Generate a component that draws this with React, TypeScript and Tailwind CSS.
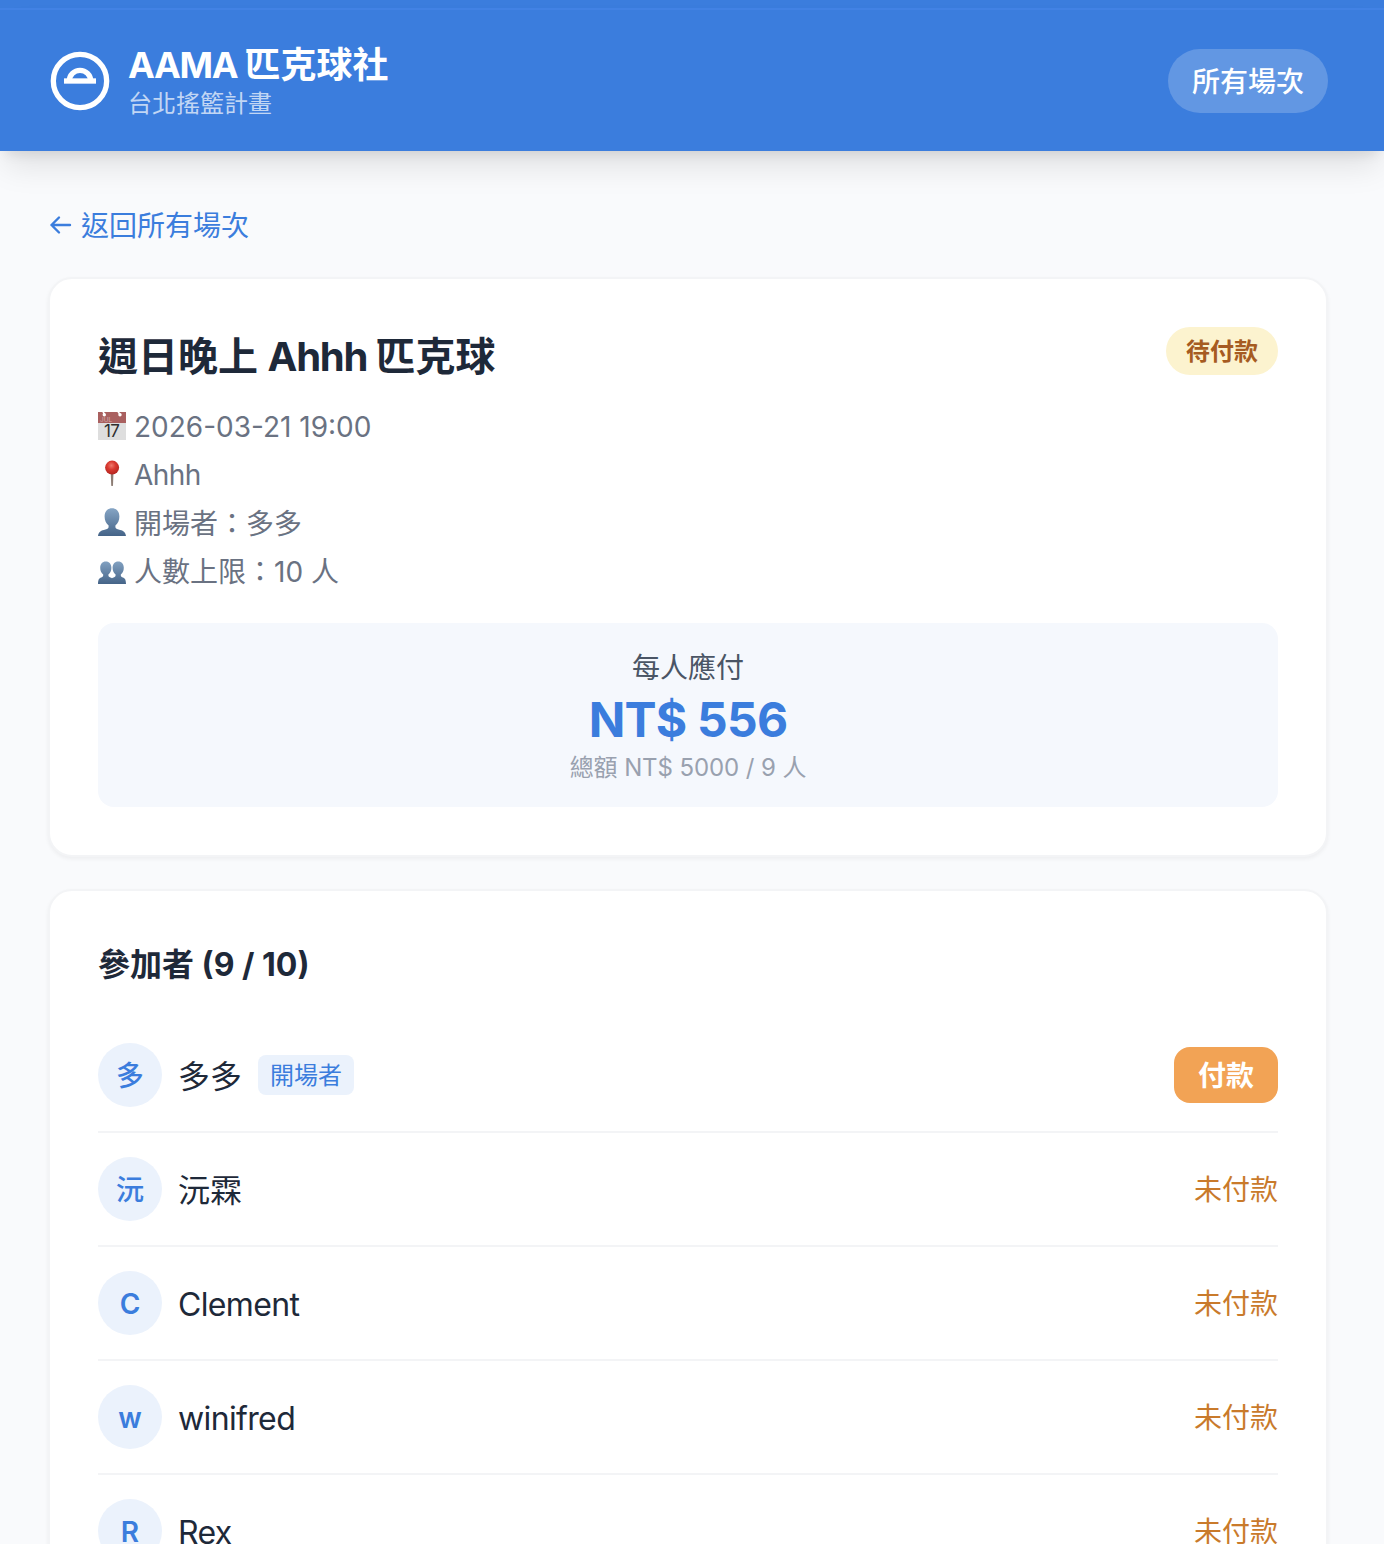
import React from 'react';
import clsx from 'clsx';

interface Participant {
  name: string;
  isHost?: boolean;
}

const PARTICIPANTS: Participant[] = [
  { name: '多多', isHost: true },
  { name: '沅霖' },
  { name: 'Clement' },
  { name: 'winifred' },
  { name: 'Rex' },
];

function Logo() {
  return (
    <svg className="w-16 h-16" viewBox="0 0 24 24" fill="none" stroke="currentColor" strokeWidth="2">
      <circle cx="12" cy="12" r="10" />
      <path d="M8 12a4 4 0 0 1 8 0" />
      <path d="M6 12h12" />
    </svg>
  );
}

function CalendarIcon() {
  return (
    <svg className="w-7 h-7 -mt-0.5 shrink-0" viewBox="0 0 28 28">
      <rect width="28" height="28" fill="#dedede" />
      <rect width="28" height="11" fill="#a9605f" />
      <path d="M5 0l1.5 2M20 0l2 2" stroke="#fff" strokeWidth="1.6" />
      <circle cx="6.3" cy="2.8" r="1.7" fill="#fff" />
      <circle cx="22" cy="2.8" r="1.7" fill="#fff" />
      <text x="2" y="9.6" fontSize="6.5" fill="#d3a9a8" fontFamily="Inter, sans-serif">JUL</text>
      <text x="13.7" y="25.2" fontSize="17" fill="#2e2e2e" textAnchor="middle" letterSpacing="-0.6" fontFamily="Inter, sans-serif">17</text>
    </svg>
  );
}

function PinIcon() {
  return (
    <svg className="w-7 h-7 -mt-0.5 shrink-0" viewBox="0 0 28 28">
      <defs>
        <radialGradient id="pin" cx="0.45" cy="0.35" r="0.65">
          <stop offset="0" stopColor="#f0796c" />
          <stop offset="0.45" stopColor="#d93a31" />
          <stop offset="1" stopColor="#b3241f" />
        </radialGradient>
      </defs>
      <path d="M12.7 12h2.8l-.5 13.2a.9.9 0 0 1-1.8 0z" fill="#8d7d75" />
      <circle cx="14.1" cy="7.6" r="7" fill="url(#pin)" />
    </svg>
  );
}

function PersonIcon() {
  return (
    <svg className="w-7 h-7 -mt-0.5 shrink-0" viewBox="0 0 28 28">
      <defs>
        <linearGradient id="person" x1="0" y1="0" x2="0" y2="28" gradientUnits="userSpaceOnUse">
          <stop offset="0" stopColor="#86a5c5" />
          <stop offset="1" stopColor="#456488" />
        </linearGradient>
      </defs>
      <path
        d="M14 .3c4.5 0 7.4 3.3 7.4 8.2 0 3.9-1.5 7.2-4 8.9-.3 2.600.6 3.500 3.200 4.200 4.200 1 6.800 2 7.400 6.400H0c.6-4.400 3.200-5.400 7.400-6.400 2.600-.7 3.500-1.600 3.200-4.200-2.500-1.700-4-5-4-8.900C6.600 3.600 9.500.3 14 .3z"
        fill="url(#person)"
      />
    </svg>
  );
}

function PeopleIcon() {
  return (
    <svg className="w-7 h-7 -mt-0.5 shrink-0" viewBox="0 0 28 28">
      <defs>
        <linearGradient id="people" x1="0" y1="4" x2="0" y2="28" gradientUnits="userSpaceOnUse">
          <stop offset="0" stopColor="#86a5c5" />
          <stop offset="1" stopColor="#456488" />
        </linearGradient>
      </defs>
      <path
        d="M7.8 5.500c3.500 0 5.600 2.600 5.600 6.200 0 3-1.200 5.400-3 6.800-.1 1.800.5 2.500 2 3 .6.2 1.100.4 1.600.7.5-.3 1-.5 1.600-.7 1.500-.5 2.100-1.200 2-3-1.800-1.400-3-3.800-3-6.800 0-3.600 2.100-6.200 5.600-6.200s5.600 2.600 5.600 6.200c0 3-1.200 5.400-3 6.800-.1 1.800.5 2.500 2 3 2.200.7 3.100 2 3.200 6.500H0c.1-4.500 1-5.800 3.200-6.500 1.500-.5 2.100-1.200 2-3-1.800-1.400-3-3.800-3-6.800 0-3.600 2.100-6.200 5.600-6.200z"
        fill="url(#people)"
      />
    </svg>
  );
}

function BackArrow() {
  return (
    <svg className="w-6 h-6 shrink-0" viewBox="0 0 24 24" fill="none" stroke="currentColor" strokeWidth="2.4" strokeLinecap="round" strokeLinejoin="round">
      <path d="M22 12H3.5M11 4.5L3.5 12l7.5 7.500" />
    </svg>
  );
}

function ParticipantRow({ name, isHost }: Participant) {
  const isLatin = /^[A-Za-z]/.test(name);

  return (
    <li className="flex items-center justify-between py-6 border-b-2 border-gray-100">
      <div className="flex items-center gap-4">
        <div
          className={clsx(
            'w-16 h-16 pt-0.5 rounded-full bg-[#ebf2fc] text-[#3b7ddd] text-[28px] flex items-center justify-center',
            isLatin ? 'font-semibold' : 'font-medium'
          )}
        >
          {name[0]}
        </div>
        <span className={clsx('pt-[3px] text-[32px] leading-12 text-gray-800', isLatin && 'tracking-[-0.02em]')}>{name}</span>
        {isHost && (
          <span className="bg-[#ebf2fc] text-[#3b7ddd] text-2xl px-3 pt-[5px] pb-[3px] rounded-lg">開場者</span>
        )}
      </div>
      {isHost ? (
        <button className="bg-[#f2a355] text-white text-[28px] leading-10 font-bold px-6 pt-[9px] pb-[7px] rounded-2xl">付款</button>
      ) : (
        <span className="pt-0.5 text-[28px] leading-10 text-[#c97a2b]">未付款</span>
      )}
    </li>
  );
}

export default function App() {
  return (
    <div className="h-[1544px] overflow-hidden bg-[#f9fafc] font-[Inter,'Noto_Sans_CJK_TC',sans-serif]">
      <div className="h-2 bg-[#3b7ddd]" />
      <header className="h-[143px] border-t-2 border-[#4282e4] bg-[#3b7ddd] text-white pl-12 pr-14 flex items-center justify-between shadow-[0_20px_30px_-5px_rgba(0,0,0,0.1),0_8px_12px_-6px_rgba(0,0,0,0.1)]">
        <div className="flex items-center gap-4">
          <Logo />
          <div className="pt-0.5">
            <h1 className="text-4xl leading-[45px] font-bold"><span className="tracking-[-0.038em]">AAMA </span>匹克球社</h1>
            <p className="text-2xl leading-8 text-white/70">台北搖籃計畫</p>
          </div>
        </div>
        <button className="bg-white/20 rounded-full px-6 pt-[13px] pb-[11px] text-[28px] leading-10 font-medium">所有場次</button>
      </header>

      <main className="pl-12 pr-14 pt-[54px]">
        <a href="#" className="flex h-10 items-center gap-[9px] text-[28px] leading-10 text-[#3b7ddd]">
          <BackArrow />
          <span className="pt-0.5">返回所有場次</span>
        </a>

        {/* Session details */}
        <section className="mt-8 h-[580px] bg-white rounded-3xl border-2 border-gray-100 shadow-[0_2px_4px_rgba(0,0,0,0.05)] p-12">
          <div className="flex items-start justify-between">
            <h2 className="pt-0.5 text-[40px] leading-14 font-bold text-gray-800">週日晚上 <span className="tracking-[-0.03em]">Ahhh </span>匹克球</h2>
            <span className="bg-[#fcf3cf] text-[#a65b21] text-2xl font-semibold px-5 pt-[9px] pb-[7px] rounded-full">待付款</span>
          </div>
          <div className="mt-[22px] space-y-2 text-[28px] leading-10 text-gray-500">
            <p className="flex h-10 items-center gap-2"><CalendarIcon /><span>2026-03-21 19:00</span></p>
            <p className="flex h-10 items-center gap-2"><PinIcon /><span className="tracking-[-0.02em]">Ahhh</span></p>
            <p className="flex h-10 items-center gap-2"><PersonIcon /><span className="pt-0.5">開場者：多多</span></p>
            <p className="flex h-10 items-center gap-2"><PeopleIcon /><span className="pt-0.5">人數上限：10 人</span></p>
          </div>
          <div className="mt-8 h-[184px] bg-[#f5f8fd] rounded-2xl pt-[25px] text-center">
            <p className="text-[28px] leading-10 text-gray-600">每人應付</p>
            <p className="text-5xl leading-16 font-bold tracking-[-0.016em] text-[#3b7ddd]">NT$ 556</p>
            <p className="text-2xl leading-8 tracking-[-0.004em] text-gray-400">總額 NT$ 5000 / 9 人</p>
          </div>
        </section>

        {/* Participants */}
        <section className="mt-8 bg-white rounded-3xl border-2 border-gray-100 shadow-[0_2px_4px_rgba(0,0,0,0.05)] p-12">
          <h3 className="pt-0.5 mb-[30px] text-[32px] leading-12 font-bold text-gray-800">參加者 (9 / 10)</h3>
          <ul>
            {PARTICIPANTS.map((p) => (
              <ParticipantRow key={p.name} {...p} />
            ))}
          </ul>
        </section>
      </main>
    </div>
  );
}
